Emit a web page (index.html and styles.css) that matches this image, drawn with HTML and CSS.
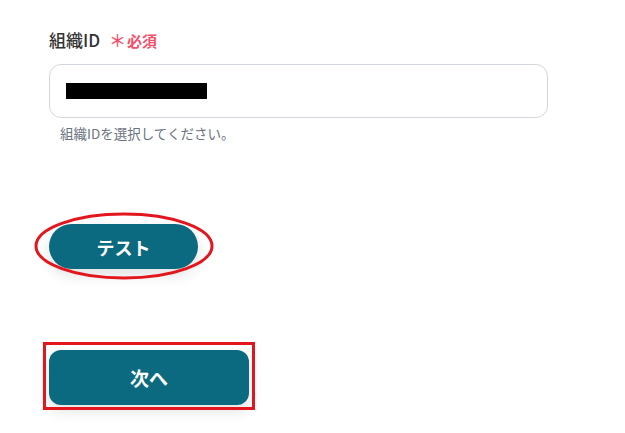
FILE: index.html
```html
<!DOCTYPE html>
<html lang="ja">
<head>
<meta charset="utf-8">
<link rel="stylesheet" href="styles.css">
</head>
<body>
<div class="page">
  <div class="label">組織ID <span class="req"><span class="ast">＊</span>必須</span></div>
  <div class="input"><span class="redact"></span></div>
  <div class="help">組織IDを選択してください。</div>
  <div class="test-wrap">
    <button class="btn-test">テスト</button>
    <svg class="ring" width="182" height="70" viewBox="0 0 182 70"><ellipse cx="90" cy="34" rx="88" ry="32" fill="none" stroke="#e3161d" stroke-width="3"/></svg>
  </div>
  <div class="next-wrap">
    <button class="btn-next">次へ</button>
    <div class="box"></div>
  </div>
</div>
</body>
</html>
```
FILE: styles.css
```css
* { box-sizing: border-box; }
body { margin: 0; background: #fff; font-family: "Noto Sans CJK JP", "Noto Sans", sans-serif; }
.page { padding: 27px 0 30px 49px; display: flex; flex-direction: column; align-items: flex-start; }
.label { font-size: 17px; font-weight: 500; color: #333; line-height: 26px; }
.req { color: #f2506a; font-size: 15px; margin-left: 5px; font-weight: 700; }
.ast { font-size: 17px; margin-right: 1px; font-weight: 500; }
.input { margin-top: 10px; width: 499px; height: 54px; border: 1px solid #d3d6dc; border-radius: 12px; display: flex; align-items: center; padding-left: 16px; }
.redact { width: 141px; height: 16px; background: #000; }
.help { margin-top: 5px; padding-left: 11px; font-size: 13.5px; line-height: 20px; color: #6b7280; }
.test-wrap { position: relative; margin-top: 81px; }
.btn-test, .btn-next { border: 0; background: #0c6a80; color: #fff; font-family: inherit; font-weight: 700; box-shadow: 0 6px 14px rgba(30,40,60,0.14); padding: 0; }
.btn-test { width: 149px; height: 45px; border-radius: 23px; display: block; font-size: 18px; }
.ring { position: absolute; left: -15px; top: -12px; }
.next-wrap { position: relative; margin-top: 81px; }
.btn-next { width: 200px; height: 55px; border-radius: 12px; display: block; font-size: 19px; }
.box { position: absolute; left: -6px; top: -8px; width: 212px; height: 68px; border: 3px solid #e3161d; }
```
